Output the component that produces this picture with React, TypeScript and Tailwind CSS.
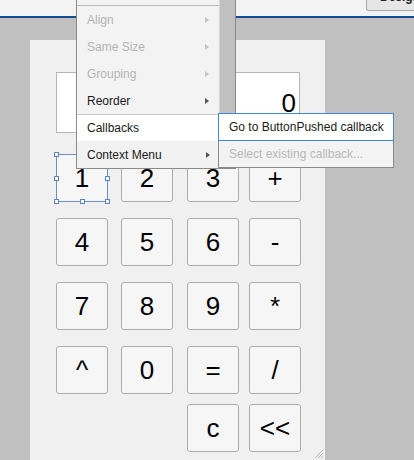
import React from "react";

const rows: (string | null)[][] = [
  ["1", "2", "3", "+"],
  ["4", "5", "6", "-"],
  ["7", "8", "9", "*"],
  ["^", "0", "=", "/"],
  [null, null, "c", "<<"],
];

const menuItems = [
  { label: "Align", disabled: true },
  { label: "Same Size", disabled: true },
  { label: "Grouping", disabled: true },
  { label: "Reorder", disabled: false },
];

function Arrow({ disabled }: { disabled?: boolean }) {
  return (
    <span
      className={
        "ml-auto mr-[10px] h-0 w-0 border-y-[3px] border-l-[4px] border-y-transparent " +
        (disabled ? "border-l-[#c4c4c4]" : "border-l-[#555555]")
      }
    />
  );
}

function Handle({ className }: { className: string }) {
  return (
    <span
      className={
        "absolute h-[5px] w-[5px] border border-[#5b84c4] bg-white " + className
      }
    />
  );
}

function CalcButton({ label }: { label: string }) {
  const selected = label === "1";
  return (
    <div
      className={
        "relative flex h-[48px] w-[52px] items-center justify-center bg-[#f6f6f6] text-[26px] leading-none text-black " +
        (selected
          ? "border border-[#6a8fcb]"
          : "rounded-[3px] border border-[#adadad]")
      }
    >
      {label}
      {selected && (
        <>
          <Handle className="-left-[3px] -top-[3px]" />
          <Handle className="-right-[3px] -top-[3px]" />
          <Handle className="-left-[3px] top-[21px]" />
          <Handle className="-right-[3px] top-[21px]" />
          <Handle className="-bottom-[3px] -left-[3px]" />
          <Handle className="-bottom-[3px] left-[23px]" />
          <Handle className="-bottom-[3px] -right-[3px]" />
        </>
      )}
    </div>
  );
}

export default function App() {
  return (
    <div className="relative h-[460px] w-[414px] overflow-hidden bg-[#c0c0c0] font-['Liberation_Sans',Arial,sans-serif]">
      {/* toolbar strip */}
      <div className="flex h-[16px] justify-end bg-[#f3f3f3]">
        <div className="mr-[-4px] h-[11px] w-[52px] overflow-hidden rounded-bl-[3px] border-b border-l border-[#a8a8a8] bg-[#e6e6e6] pl-[13px]">
          <div className="mt-[-9px] text-[12px] font-bold leading-[12px] text-[#222]">
            Design
          </div>
        </div>
      </div>
      <div className="h-[2px] bg-[#0f4d8e]" />

      {/* app canvas */}
      <div className="pl-[30px] pt-[22px]">
        <div className="relative h-[420px] w-[295px] bg-[#f0f0f0] pl-[26px] pt-[32px]">
          <div className="flex h-[61px] w-[244px] items-center justify-end border border-[#b5b5b5] bg-white pr-[3px] text-[26px] leading-none text-black">
            0
          </div>

          <div className="mt-[21px] flex flex-col gap-[16px]">
            {rows.map((row, i) => (
              <div
                key={i}
                className={
                  "grid grid-cols-[65px_66px_62px_52px] " +
                  (i === 4 ? "-mt-[6px]" : "")
                }
              >
                {row.map((b, j) =>
                  b ? <CalcButton key={j} label={b} /> : <div key={j} />
                )}
              </div>
            ))}
          </div>

          <svg
            className="absolute bottom-[1px] right-[1px]"
            width="10"
            height="10"
            viewBox="0 0 10 10"
          >
            <path
              d="M9 1 L1 9 M9 4 L4 9 M9 7 L7 9"
              stroke="#b8b8b8"
              strokeWidth="1"
            />
          </svg>
        </div>
      </div>

      {/* context menu */}
      <div className="absolute left-[76px] top-0 w-[160px] border-x border-b border-[#8a8a8a] text-[12px] leading-none">
        <div className="flex">
          <div className="w-[142px] bg-[#f3f3f3]">
            <div className="h-[5px]" />
            <div className="h-[1px] bg-[#bdbdbd]" />
            {menuItems.map((m) => (
              <div
                key={m.label}
                className={
                  "flex h-[27px] items-center pl-[10px] " +
                  (m.disabled ? "text-[#b3b3b3]" : "text-[#1a1a1a]")
                }
              >
                {m.label}
                <Arrow disabled={m.disabled} />
              </div>
            ))}
          </div>
          <div className="flex-1 border-l border-[#d6d6d6] bg-[#c0c0c0]" />
        </div>
        <div className="flex h-[27px] items-center border-t border-[#c9c9c9] bg-white pl-[10px] text-[#1a1a1a]">
          Callbacks
          <span className="ml-[116px] h-0 w-0 border-y-[3px] border-l-[4px] border-y-transparent border-l-[#555555]" />
        </div>
        <div className="flex h-[27px] items-center bg-[#f2f2f2] pl-[10px] text-[#1a1a1a]">
          Context Menu
          <span className="ml-[44px] h-0 w-0 border-y-[3px] border-l-[4px] border-y-transparent border-l-[#555555]" />
        </div>
      </div>

      {/* submenu */}
      <div className="absolute left-[218px] top-[113px] w-[176px] text-[12px] leading-none">
        <div className="flex h-[28px] items-center border border-[#3d88d4] bg-white pl-[10px] text-[#1a1a1a]">
          Go to ButtonPushed callback
        </div>
        <div className="flex h-[27px] items-center border-x border-b border-[#8a8a8a] bg-[#f3f3f3] pl-[10px] text-[#b8b8b8]">
          Select existing callback...
        </div>
      </div>
    </div>
  );
}
